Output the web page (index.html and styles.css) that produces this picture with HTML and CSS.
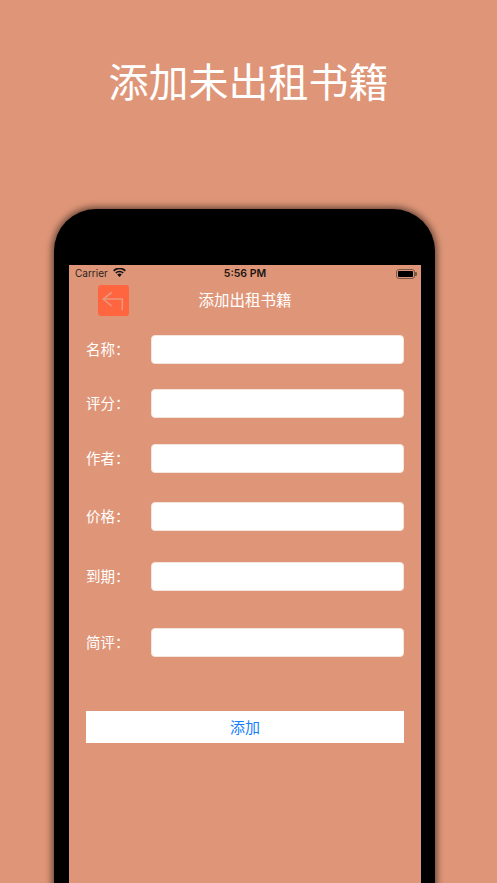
FILE: index.html
```html
<!DOCTYPE html>
<html lang="zh-CN">
<head>
<meta charset="utf-8">
<title>添加未出租书籍</title>
<link rel="stylesheet" href="styles.css">
</head>
<body>
<div class="page">
  <h1 class="headline">添加未出租书籍</h1>
  <div class="phone">
    <div class="screen">
      <div class="status">
        <div class="status-left">
          <span class="carrier">Carrier</span>
          <svg class="wifi" width="13" height="9" viewBox="0 0 13 9"><path d="M6.500 9 4.200 6.500a3.300 3.300 0 0 1 4.600 0Z" fill="#111"/><path d="M2.800 5a5.300 5.300 0 0 1 7.400 0" fill="none" stroke="#111" stroke-width="1.700"/><path d="M.7 2.800a8.300 8.300 0 0 1 11.600 0" fill="none" stroke="#111" stroke-width="1.700"/></svg>
        </div>
        <span class="time">5:56 PM</span>
        <div class="battery"><span class="battery-fill"></span></div>
      </div>
      <div class="navbar">
        <button class="back" aria-label="返回">
          <svg width="31" height="31" viewBox="0 0 31 31"><path d="M24.300 25.200V14H5.500M13.700 7.500 5.300 14 13.700 21" fill="none" stroke="#e9967c" stroke-width="1.600"/></svg>
        </button>
        <span class="nav-title">添加出租书籍</span>
      </div>
      <div class="form">
        <div class="row r1"><label class="label">名称<span class="colon">：</span></label><div class="field"></div></div>
        <div class="row r2"><label class="label">评分<span class="colon">：</span></label><div class="field"></div></div>
        <div class="row r3"><label class="label">作者<span class="colon">：</span></label><div class="field"></div></div>
        <div class="row r4"><label class="label">价格<span class="colon">：</span></label><div class="field"></div></div>
        <div class="row r5"><label class="label">到期<span class="colon">：</span></label><div class="field"></div></div>
        <div class="row r6"><label class="label">简评<span class="colon">：</span></label><div class="field"></div></div>
        <button class="submit">添加</button>
      </div>
    </div>
  </div>
</div>
</body>
</html>
```
FILE: styles.css
```css
* { box-sizing: border-box; }
html, body { margin: 0; padding: 0; }
body {
  width: 497px;
  height: 883px;
  overflow: hidden;
  background: #df9678;
  font-family: "Noto Sans CJK SC", "Liberation Sans", sans-serif;
}
.page { height: 883px; overflow: hidden; }
.headline {
  margin: 0;
  padding-top: 51px;
  height: 209px;
  color: #fff;
  font-size: 40px;
  font-weight: 400;
  line-height: 58px;
  text-align: center;
}
.phone {
  width: 381px;
  height: 760px;
  margin-left: 54px;
  padding: 56px 14px 0 15px;
  background: #000;
  border-radius: 42px 42px 0 0;
  box-shadow: 0 0 7px 2px rgba(0, 0, 0, 0.55);
}
.screen { height: 700px; background: #df9678; }
.status {
  height: 17px;
  padding: 0 6px;
  display: grid;
  grid-template-columns: 1fr auto 1fr;
  align-items: center;
  color: #2a1e18;
  font-family: Inter, "Liberation Sans", sans-serif;
  font-size: 10.500px;
  line-height: 15px;
}
.status-left { display: flex; align-items: center; gap: 5px; }
.carrier { font-size: 10px; }
.wifi { display: block; margin-top: -3px; }
.time { font-weight: 600; font-size: 10.500px; color: #1c1410; }
.battery {
  position: relative;
  justify-self: end;
  width: 19px;
  height: 10px;
  padding: 1px;
  border: 1px solid #7c5647;
  border-radius: 3px;
}
.battery::after {
  content: "";
  position: absolute;
  right: -3px;
  top: 2px;
  width: 2px;
  height: 4px;
  background: #7c5647;
  border-radius: 0 1px 1px 0;
}
.battery-fill { display: block; height: 100%; background: #000; border-radius: 1px; }
.navbar {
  position: relative;
  height: 31px;
  margin-top: 3px;
  display: flex;
  align-items: center;
  justify-content: center;
}
.back {
  position: absolute;
  left: 29px;
  top: 0;
  width: 31px;
  height: 31px;
  padding: 0;
  border: 0;
  border-radius: 3px;
  background: #ff6640;
}
.back svg { display: block; }
.nav-title { color: #fff; font-size: 15.500px; line-height: 29px; height: 31px; }
.form { padding: 0 17px; }
.row { display: flex; align-items: flex-start; height: 29px; }
.r1 { margin-top: 19px; }
.r2 { margin-top: 25px; }
.r3 { margin-top: 26px; }
.r4 { margin-top: 29px; }
.r5 { margin-top: 31px; }
.r6 { margin-top: 37px; }
.label { width: 65px; color: #fff; font-size: 14.500px; line-height: 27px; }
.colon { font-family: "Noto Sans CJK TC", sans-serif; }
.field {
  width: 253px;
  height: 29px;
  background: #fff;
  border: 1px solid #f4e6de;
  border-radius: 4px;
}
.submit {
  display: block;
  width: 318px;
  height: 32px;
  margin-top: 54px;
  padding: 0 0 2px;
  border: 0;
  background: #fff;
  color: #157efb;
  font-family: inherit;
  font-size: 15px;
}
```
